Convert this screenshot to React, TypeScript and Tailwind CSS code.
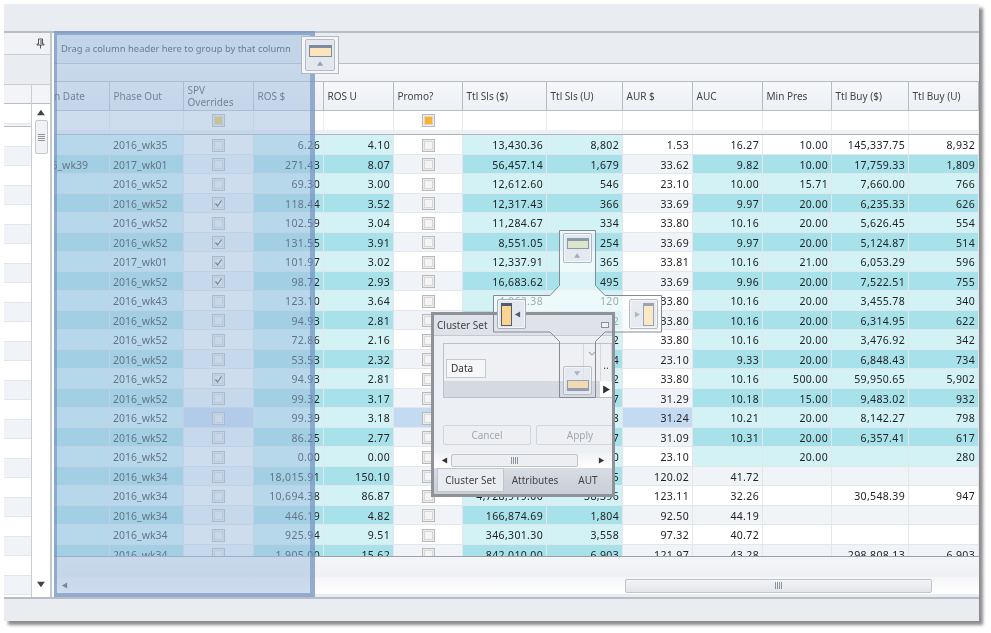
import React from "react";

const cols = [56, 74, 70, 70, 70, 69, 84, 76, 70, 70, 69, 77, 70];
const heads = ["Phase In Date", "Phase Out", "SPV Overrides", "ROS $", "ROS U", "Promo?", "Ttl Sls ($)", "Ttl Sls (U)", "AUR $", "AUC", "Min Pres", "Ttl Buy ($)", "Ttl Buy (U)"];

type R = [string, string, number, string, string, string, string, string, string, string, string, string];
const rows: R[] = [
  ["", "2016_wk35", 0, "6.26", "4.10", "13,430.36", "8,802", "1.53", "16.27", "10.00", "145,337.75", "8,932"],
  ["2016_wk39", "2017_wk01", 0, "271.43", "8.07", "56,457.14", "1,679", "33.62", "9.82", "10.00", "17,759.33", "1,809"],
  ["", "2016_wk52", 0, "69.30", "3.00", "12,612.60", "546", "23.10", "10.00", "15.71", "7,660.00", "766"],
  ["", "2016_wk52", 1, "118.44", "3.52", "12,317.43", "366", "33.69", "9.97", "20.00", "6,235.33", "626"],
  ["", "2016_wk52", 0, "102.59", "3.04", "11,284.67", "334", "33.80", "10.16", "20.00", "5,626.45", "554"],
  ["", "2016_wk52", 1, "131.55", "3.91", "8,551.05", "254", "33.69", "9.97", "20.00", "5,124.87", "514"],
  ["", "2017_wk01", 1, "101.97", "3.02", "12,337.91", "365", "33.81", "10.16", "21.00", "6,053.29", "596"],
  ["", "2016_wk52", 1, "98.72", "2.93", "16,683.62", "495", "33.69", "9.96", "20.00", "7,522.51", "755"],
  ["", "2016_wk43", 0, "123.10", "3.64", "4,062.38", "120", "33.80", "10.16", "20.00", "3,455.78", "340"],
  ["", "2016_wk52", 0, "94.93", "2.81", "9,480.12", "282", "33.80", "10.16", "20.00", "6,314.95", "622"],
  ["", "2016_wk52", 0, "72.86", "2.16", "7,260.44", "212", "33.80", "10.16", "20.00", "3,476.92", "342"],
  ["", "2016_wk52", 0, "53.53", "2.32", "5,350.10", "234", "23.10", "9.33", "20.00", "6,848.43", "734"],
  ["", "2016_wk52", 1, "94.93", "2.81", "9,480.12", "282", "33.80", "10.16", "500.00", "59,950.65", "5,902"],
  ["", "2016_wk52", 0, "99.32", "3.17", "9,900.20", "317", "31.29", "10.18", "15.00", "9,483.02", "932"],
  ["", "2016_wk52", 0, "99.39", "3.18", "9,930.90", "318", "31.24", "10.21", "20.00", "8,142.27", "798"],
  ["", "2016_wk52", 0, "86.25", "2.77", "8,610.75", "277", "31.09", "10.31", "20.00", "6,357.41", "617"],
  ["", "2016_wk52", 0, "0.00", "0.00", "0.00", "0", "23.10", "", "20.00", "", "280"],
  ["", "2016_wk34", 0, "18,015.91", "150.10", "1,801,591.00", "15,015", "120.02", "41.72", "", "", ""],
  ["", "2016_wk34", 0, "10,694.38", "86.87", "4,728,919.00", "38,396", "123.11", "32.26", "", "30,548.39", "947"],
  ["", "2016_wk34", 0, "446.19", "4.82", "166,874.69", "1,804", "92.50", "44.19", "", "", ""],
  ["", "2016_wk34", 0, "925.94", "9.51", "346,301.30", "3,558", "97.32", "40.72", "", "", ""],
  ["", "2016_wk34", 0, "1,905.00", "15.62", "842,010.00", "6,903", "121.97", "43.28", "", "298,808.13", "6,903"],
];

function Check({ on, tone }: { on?: boolean; tone?: "amber" | "orange" }) {
  const fill = tone === "orange" ? "bg-[#f7b32b]" : tone === "amber" ? "bg-[#f4c542]" : "bg-[#f4f4f4]";
  return (
    <span className="flex h-[13px] w-[13px] items-center justify-center border border-[#b9b9b9] bg-[#ececec] p-[1px]">
      <span className={`relative flex h-full w-full items-center justify-center border border-[#d8d8d8] ${fill}`}>
        {on && (
          <svg viewBox="0 0 9 9" className="absolute h-[9px] w-[9px]">
            <path d="M1.5 4.5 L3.6 7 L7.5 1.5" fill="none" stroke="#4a4a4a" strokeWidth="1.2" />
          </svg>
        )}
      </span>
    </span>
  );
}

function Grip({ vertical }: { vertical?: boolean }) {
  return vertical ? (
    <span className="flex flex-col gap-[1px]">
      {[0, 1, 2, 3].map((i) => <span key={i} className="h-[1px] w-[7px] bg-[#8e939b]" />)}
    </span>
  ) : (
    <span className="flex gap-[1px]">
      {[0, 1, 2, 3].map((i) => <span key={i} className="h-[7px] w-[1px] bg-[#8e939b]" />)}
    </span>
  );
}

function Tri({ dir, cls, size = 7 }: { dir: "l" | "r" | "u" | "d"; cls: string; size?: number }) {
  const p = { l: "7,0 7,7 1,3.5", r: "1,0 1,7 7,3.5", u: "0,6 7,6 3.5,1", d: "0,1 7,1 3.5,6" }[dir];
  return (
    <svg viewBox="0 0 8 7" width={size} height={size} className="block">
      <polygon points={p} className={cls} />
    </svg>
  );
}

function GridRow({ r, i }: { r: R; i: number }) {
  const alt = i % 2 === 1;
  const tint = alt ? "bg-[#a7e2eb]" : "bg-[#d2f2f6]";
  const plain = i === 14 ? "bg-[#c4daf2]" : alt ? "bg-[#f0f4f9]" : "bg-white";
  const condTint = i >= 1 && i <= 16 ? tint : alt ? "bg-[#f0f4f9]" : "bg-white";
  const base = "flex h-full shrink-0 items-center overflow-hidden whitespace-nowrap border-r border-b border-[#e3e6ea]";
  const classes = [tint, tint, plain, tint, tint, plain, tint, tint, plain, condTint, condTint, condTint, condTint];
  const values: (string | number)[] = [r[0], r[1], r[2], r[3], r[4], "", r[5], r[6], r[7], r[8], r[9], r[10], r[11]];
  return (
    <div className="flex h-[19.5px] shrink-0">
      {cols.map((w, c) => {
        if (c === 2 || c === 5) {
          return (
            <div key={c} style={{ width: w }} className={`${base} justify-center pt-[2px] ${classes[c]}`}>
              <Check on={c === 2 && r[2] === 1} />
            </div>
          );
        }
        const align = c === 0 ? "justify-end pr-[21px] pt-[4px]" : c === 1 ? "justify-start pl-[3px] pt-[4px]" : "justify-end pr-[3px] pt-[4px] tracking-[0.35px]";
        return (
          <div key={c} style={{ width: w }} className={`${base} ${align} ${classes[c]}`}>
            {values[c]}
          </div>
        );
      })}
    </div>
  );
}

function GuideButton({ cls, children }: { cls: string; children: React.ReactNode }) {
  return (
    <div className={`absolute flex items-center justify-center rounded-[2px] border border-[#a6aeb9] bg-[#e3e8ef] shadow-[inset_0_0_0_1px_rgba(255,255,255,0.6)] ${cls}`}>
      {children}
    </div>
  );
}

export default function App() {
  return (
    <div className="relative h-[633px] w-[991px] overflow-hidden bg-white pl-1 pt-1 text-[10.5px] text-[#222] blur-[0.3px] [font-family:'Noto_Sans',sans-serif]">
      <div className="flex h-[617px] w-[975px] flex-col bg-[#e9ecf1] shadow-[4px_4px_3px_rgba(0,0,0,0.45)]">
        <div className="h-[29px] shrink-0 border-b-2 border-[#b8bdc5] bg-[#e9ecf1]" />

        <div className="flex h-[564px] shrink-0">
          {/* left dock panel */}
          <div className="flex w-[48px] shrink-0 flex-col border-r-2 border-[#c3c7ce] bg-white">
            <div className="flex h-[22px] shrink-0 items-center justify-end border-b border-[#c9cdd4] bg-[#f0f2f6] pr-[5px]">
              <svg viewBox="0 0 9 11" className="h-[11px] w-[9px]">
                <path d="M2.5 1 H6.5 V6 H8 V7 H1 V6 H2.5 Z M4.5 7 V10.5 M5 2 V6" fill="none" stroke="#555" strokeWidth="1" />
              </svg>
            </div>
            <div className="h-[30px] shrink-0 border-b border-[#c9cdd4] bg-[#e9ecf1]" />
            <div className="flex min-h-0 flex-1">
              <div className="w-[28px] shrink-0 overflow-hidden border-r border-[#c9cdd4]">
                <div className="h-[19px] border-b border-[#b9bec6] bg-[#f2f4f7]" />
                <div className="h-[20px] border-b border-[#e3e6ea] bg-white" />
                <div className="h-[3px] border-b border-[#b9bec6] bg-[#f0f2f6]" />
                {Array.from({ length: 24 }).map((_, i) => (
                  <div key={i} className={`h-[19.5px] border-b border-[#e3e6ea] ${i % 2 ? "bg-[#f0f4f9]" : "bg-white"}`} />
                ))}
              </div>
              <div className="flex flex-1 flex-col items-center bg-white">
                <div className="h-[19px] w-full shrink-0 border-b border-[#b9bec6] bg-[#f2f4f7]" />
                <div className="mt-[4px]"><Tri dir="u" cls="fill-[#444]" size={9} /></div>
                <div className="mt-[3px] flex h-[34px] w-[13px] items-center justify-center rounded-[2px] border border-[#c3c7ce] bg-[#eff1f4]">
                  <Grip vertical />
                </div>
                <div className="mb-[8px] mt-auto"><Tri dir="d" cls="fill-[#444]" size={9} /></div>
              </div>
            </div>
          </div>

          <div className="w-[2px] shrink-0 bg-white" />

          {/* grid */}
          <div className="flex w-[925px] shrink-0 flex-col">
            <div className="flex h-[31px] shrink-0 items-center border-b border-[#b9bec6] bg-[#e9ecf1] pl-[7px] pt-[3px] text-[9.4px] text-[#333]">
              Drag a column header here to group by that column
            </div>
            <div className="h-[17px] shrink-0 bg-gradient-to-b from-[#f6f7fa] to-[#eef1f5]" />
            <div className="flex h-[30px] shrink-0 bg-gradient-to-b from-[#f6f8fa] to-[#eceff4] text-[10px] text-[#444]">
              {cols.map((w, c) => (
                <div key={c} style={{ width: w }} className={`flex shrink-0 items-center overflow-hidden border-t border-r border-b border-[#b5bcc6] pl-[3.5px] leading-[12px] ${c === 0 ? "justify-end whitespace-nowrap pr-[24px]" : ""}`}>
                  {c === 2 ? <span>SPV<br />Overrides</span> : heads[c]}
                </div>
              ))}
            </div>
            <div className="flex h-[19px] shrink-0 bg-white">
              {cols.map((w, c) => (
                <div key={c} style={{ width: w }} className="flex shrink-0 items-center justify-center border-r border-[#e8eaed]">
                  {c === 2 && <Check tone="amber" />}
                  {c === 5 && <Check tone="orange" />}
                </div>
              ))}
            </div>
            <div className="h-[5px] shrink-0 border-b border-[#aeb4bc] bg-[#eef0f4]" />
            <div className="flex h-[422px] shrink-0 flex-col overflow-hidden border-b border-[#9aa1ab]">
              {rows.map((r, i) => <GridRow key={i} r={r} i={i} />)}
            </div>
            <div className="h-[20px] shrink-0 bg-gradient-to-b from-[#f3f5f8] to-[#eef0f4]" />
            <div className="flex h-[17px] shrink-0 items-center bg-gradient-to-b from-[#f5f6f9] to-white pl-[7px]">
              <Tri dir="l" cls="fill-[#555]" />
              <div className="ml-[557px] flex h-[14px] w-[307px] items-center justify-center rounded-[2px] border border-[#bfc3ca] bg-gradient-to-b from-[#f3f4f7] to-[#e2e5ea]">
                <Grip />
              </div>
            </div>
          </div>
        </div>

        <div className="h-[24px] shrink-0 border-t-2 border-[#b8bdc5] bg-[#e9ecf1]" />
      </div>

      {/* drop highlight */}
      <div className="absolute left-[54px] top-[31px] h-[566px] w-[261px] border-t-4 border-r-[5px] border-b-4 border-l-[3px] border-[rgba(110,140,188,0.6)] bg-[rgba(160,190,222,0.52)]" />

      {/* group panel guide */}
      <div className="absolute left-[301px] top-[36px] flex h-[38px] w-[38px] items-center justify-center border border-[#b4b9c1] bg-[#f3f5f8]">
        <div className="flex h-[32px] w-[30px] flex-col items-center rounded-[2px] border border-[#b6bcc6] bg-[#e3e8ef] pt-[5px]">
          <div className="h-[12px] w-[23px] border border-t-[3px] border-[#7d8aa0] bg-[#fbe5bd]" />
          <div className="mt-[3px]"><Tri dir="u" cls="fill-[#8fa0b5]" /></div>
        </div>
      </div>

      {/* dock guide fill */}
      <svg className="absolute left-0 top-0" width="991" height="633">
        <polygon points="559.5,230.5 595.5,230.5 595.5,285.5 605,295.5 661.5,295.5 661.5,332 605,332 595.5,341.5 595.5,397.5 559.5,397.5 559.5,341.5 550,332 493.5,332 493.5,295.5 550,295.5 559.5,285.5" fill="rgba(255,255,255,0.6)" />
      </svg>

      {/* floating panel */}
      <div className="absolute left-[431px] top-[312px] flex h-[185px] w-[184px] flex-col border-[3px] border-[#8e9399] bg-[#eceff4] text-[10px]">
        <div className="flex h-[21px] shrink-0 items-center justify-between border-b border-[#c4c8cf] bg-[#dfe2e8] pl-[3px] pr-[3px] text-[#444]">
          Cluster Set
          <span className="h-[6px] w-[8px] border border-[#8b9098] bg-[#eceff4]" />
        </div>
        <div className="flex min-h-0 flex-1 flex-col overflow-hidden pl-[9px]">
          <div className="mt-[7px] flex h-[55px] w-[170px] shrink-0 flex-col border border-[#bcc1c9]">
            <div className="flex h-[37px] shrink-0 bg-[#eef0f4]">
              <div className="flex-1 pl-[2px] pt-[15px]">
                <div className="flex h-[19px] w-[40px] items-center border border-[#c4c8cf] bg-[#f6f7f9] pl-[4px] text-[#333]">Data</div>
              </div>
              <div className="flex w-[17px] justify-center border-l border-[#d4d7dd] pt-[7px]">
                <svg viewBox="0 0 8 5" className="h-[5px] w-[8px]"><path d="M1 1 L4 4 L7 1" fill="none" stroke="#a9aeb6" strokeWidth="1.2" /></svg>
              </div>
              <div className="flex w-[12px] items-center justify-center border-l border-r border-[#d4d7dd] pt-[6px] text-[#444]">..</div>
            </div>
            <div className="flex flex-1 justify-end bg-[#d5d9e1]">
              <div className="flex w-[12px] items-center justify-center bg-white"><Tri dir="r" cls="fill-[#333]" size={9} /></div>
            </div>
          </div>
          <div className="mt-[27px] flex h-[20px] shrink-0 gap-[5px] text-[#a3a8b0]">
            <div className="flex h-full w-[88px] shrink-0 items-center justify-center rounded-[2px] border border-[#d2d5db] bg-[#edeff3]">Cancel</div>
            <div className="flex h-full w-[88px] shrink-0 items-center justify-center rounded-[2px] border border-[#d2d5db] bg-[#edeff3]">Apply</div>
          </div>
        </div>
        <div className="flex h-[15px] shrink-0 items-center bg-gradient-to-b from-[#f1f2f5] to-white pl-[7px]">
          <Tri dir="l" cls="fill-[#333]" />
          <div className="ml-[3px] flex h-[13px] w-[127px] items-center justify-center rounded-[2px] border border-[#bfc3ca] bg-[#eceef2]"><Grip /></div>
          <div className="ml-[20px]"><Tri dir="r" cls="fill-[#333]" /></div>
        </div>
        <div className="flex h-[26px] shrink-0 items-start bg-gradient-to-b from-[#d8dce3] to-[#c9ced7] pl-[3px] text-[#444]">
          <div className="flex h-[24px] w-[67px] shrink-0 items-center justify-center border border-[#c0c5cd] bg-[#e9ecf1]">Cluster Set</div>
          <div className="flex h-[24px] w-[62px] shrink-0 items-center justify-center">Attributes</div>
          <div className="flex h-[24px] w-[44px] shrink-0 items-center justify-center">AUT</div>
        </div>
      </div>

      {/* dock guide outline */}
      <svg className="absolute left-0 top-0" width="991" height="633">
        <polygon points="559.5,230.5 595.5,230.5 595.5,285.5 605,295.5 661.5,295.5 661.5,332 605,332 595.5,341.5 595.5,397.5 559.5,397.5 559.5,341.5 550,332 493.5,332 493.5,295.5 550,295.5 559.5,285.5" fill="none" stroke="#848b94" strokeWidth="1" />
      </svg>

      <GuideButton cls="left-[563px] top-[233px] h-[30px] w-[29px] flex-col justify-start pt-[4px] opacity-85">
        <div className="h-[11px] w-[22px] border border-t-[3px] border-[#7d8aa0] bg-[#dce3bf]" />
        <div className="mt-[3px]"><Tri dir="u" cls="fill-[#8fa0b5]" /></div>
      </GuideButton>
      <GuideButton cls="left-[497px] top-[299px] h-[30px] w-[29px] justify-start gap-[2px] pl-[3px]">
        <div className="h-[23px] w-[11px] border border-t-[3px] border-[#4e5d75] bg-[#fcd48f]" />
        <Tri dir="l" cls="fill-[#4e5d75]" />
      </GuideButton>
      <GuideButton cls="left-[629px] top-[299px] h-[30px] w-[29px] justify-end gap-[2px] pr-[3px] opacity-85">
        <Tri dir="r" cls="fill-[#a3aebd]" />
        <div className="h-[23px] w-[11px] border border-t-[3px] border-[#8a95a6] bg-[#fbe5bd]" />
      </GuideButton>
      <GuideButton cls="left-[563px] top-[366px] h-[29px] w-[29px] flex-col justify-end pb-[3px] opacity-75">
        <Tri dir="d" cls="fill-[#8fa0b5]" />
        <div className="mt-[3px] h-[11px] w-[22px] border border-b-[3px] border-[#7d8aa0] bg-[#fbdca5]" />
      </GuideButton>
    </div>
  );
}
